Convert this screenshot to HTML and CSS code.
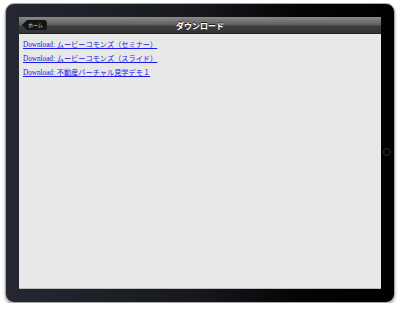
FILE: index.html
```html
<!DOCTYPE html>
<html lang="ja">
<head>
    <meta charset="UTF-8">
    <meta name="viewport" content="width=device-width, initial-scale=1.0">
    <title>ダウンロード</title>
    <link rel="stylesheet" href="styles.css">
</head>
<body>
    <div class="ipad">
        <div class="screen">
            <div class="navbar">
                <a class="back-btn" href="#">ホーム</a>
                <span class="title">ダウンロード</span>
            </div>
            <div class="content">
                <a class="dl-link" href="#">Download: ムービーコモンズ（セミナー）</a>
                <a class="dl-link" href="#">Download: ムービーコモンズ（スライド）</a>
                <a class="dl-link" href="#">Download: 不動産バーチャル見学デモ１</a>
            </div>
        </div>
        <div class="home-btn"></div>
    </div>
</body>
</html>
```

FILE: styles.css
```css
body {
    margin: 0;
    background: #fff;
    font-family: "Liberation Serif", "Noto Sans CJK JP", serif;
}
.ipad {
    position: relative;
    box-sizing: border-box;
    width: 390px;
    height: 300px;
    margin: 3px 0 0 5px;
    padding: 13px;
    border: 1px solid #a8a8a8;
    border-radius: 9px;
    background: linear-gradient(to right, #252832, #16181d 50%, #050505 75%, #000);
    box-shadow: 0 2px 3px rgba(0, 0, 0, 0.35);
}
.screen {
    display: flex;
    flex-direction: column;
    height: 100%;
    background: #e8e8e8;
    border-bottom: 1px solid #bbb;
    box-sizing: border-box;
}
.navbar {
    position: relative;
    display: flex;
    align-items: center;
    justify-content: center;
    height: 16px;
    background: linear-gradient(to bottom, #8a8a8a, #5e5e5e 50%, #3e3e3e 55%, #333);
    border-bottom: 1px solid #222;
}
.title {
    color: #fff;
    font-family: "Noto Sans CJK JP", sans-serif;
    font-size: 8px;
    font-weight: bold;
    text-shadow: 0 -1px 0 #222;
}
.back-btn {
    position: absolute;
    left: 3px;
    top: 3px;
    height: 10px;
    padding: 0 4px 0 6px;
    line-height: 10px;
    font-family: "Noto Sans CJK JP", sans-serif;
    font-size: 5px;
    color: #ddd;
    text-decoration: none;
    background: #151515;
    border-radius: 3px;
    clip-path: polygon(0 50%, 5px 0, 100% 0, 100% 100%, 5px 100%);
}
.content {
    display: flex;
    flex-direction: column;
    align-items: flex-start;
    padding: 4px 4px;
}
.dl-link {
    font-size: 7.2px;
    line-height: 14px;
    color: #1a1ae6;
}
.home-btn {
    position: absolute;
    right: 3px;
    top: 144px;
    width: 6px;
    height: 6px;
    border: 1px solid #333;
    border-radius: 50%;
}
```
